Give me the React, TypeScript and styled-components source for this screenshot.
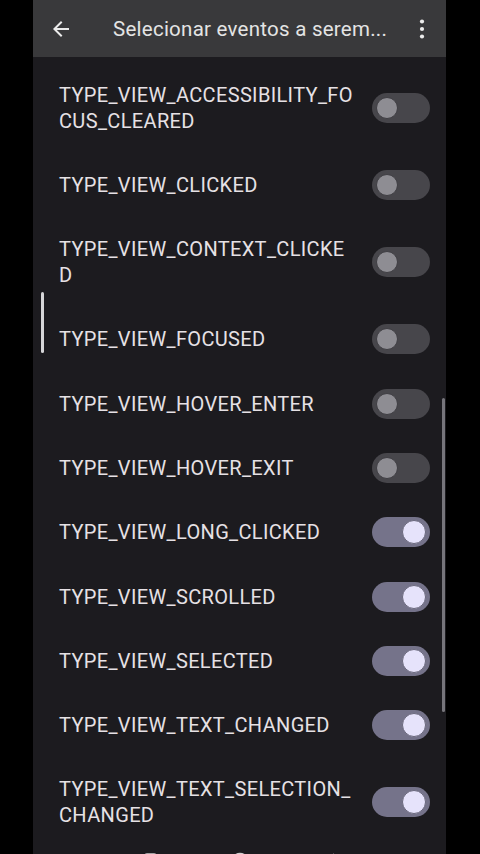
import React from 'react';
import styled, { createGlobalStyle } from 'styled-components';

const GlobalStyle = createGlobalStyle`
  html, body {
    margin: 0;
    padding: 0;
    background: #000;
  }
  * {
    box-sizing: border-box;
  }
`;

const Screen = styled.div`
  width: 480px;
  height: 854px;
  background: #000;
  display: flex;
  justify-content: flex-start;
  padding-left: 33px;
`;

const Phone = styled.div`
  position: relative;
  width: 413px;
  height: 854px;
  background: #1c1b1f;
  overflow: hidden;
  display: flex;
  flex-direction: column;
  font-family: Roboto, "Liberation Sans", sans-serif;
`;

const TopBar = styled.header`
  height: 57px;
  flex-shrink: 0;
  background: #39393b;
  display: flex;
  align-items: center;
  padding: 0 12px 0 16px;
`;

const IconButton = styled.div`
  width: 24px;
  height: 24px;
  display: flex;
  align-items: center;
  justify-content: center;
  flex-shrink: 0;
`;

const Title = styled.div`
  flex: 1;
  margin: 0 8px 0 40px;
  color: #e4e4e4;
  font-size: 20.5px;
  letter-spacing: 0.25px;
  white-space: nowrap;
`;

const List = styled.div`
  display: flex;
  flex-direction: column;
  padding: 6px 16px 0 26px;
  flex-shrink: 0;
`;

const Row = styled.div<{ $tall: boolean }>`
  height: ${(p) => (p.$tall ? '90px' : '64.3px')};
  display: flex;
  align-items: center;
  justify-content: space-between;
`;

const Label = styled.div`
  color: #e6e1e5;
  font-size: 20px;
  line-height: 26px;
  letter-spacing: 0.35px;
`;

const Track = styled.div<{ $on: boolean }>`
  position: relative;
  width: 58px;
  height: 30px;
  border-radius: 15px;
  background: ${(p) => (p.$on ? '#75738a' : '#47464b')};
  flex-shrink: 0;
  display: flex;
  align-items: center;
  justify-content: ${(p) => (p.$on ? 'flex-end' : 'flex-start')};
  padding: 0 4px;
`;

const Thumb = styled.div<{ $on: boolean }>`
  width: ${(p) => (p.$on ? '24px' : '22px')};
  height: ${(p) => (p.$on ? '24px' : '22px')};
  border-radius: 50%;
  background: ${(p) => (p.$on ? '#e6e3fb' : '#8e8d93')};
  border: ${(p) => (p.$on ? '1.5px solid #6a687c' : '1.5px solid #3f3e43')};
`;

const NavBar = styled.div`
  height: 48px;
  flex-shrink: 0;
  display: flex;
  align-items: flex-start;
  padding-top: 4px;
`;

const EdgeGlow = styled.div`
  position: absolute;
  left: 8px;
  top: 292px;
  width: 3px;
  height: 61px;
  border-radius: 2px;
  background: #d6d6d8;
`;

const ScrollThumb = styled.div`
  position: absolute;
  right: 1px;
  top: 398px;
  width: 3px;
  height: 314px;
  border-radius: 2px;
  background: #76757b;
`;

type Item = { lines: string[]; on: boolean };

const items: Item[] = [
  { lines: ['TYPE_VIEW_ACCESSIBILITY_FO', 'CUS_CLEARED'], on: false },
  { lines: ['TYPE_VIEW_CLICKED'], on: false },
  { lines: ['TYPE_VIEW_CONTEXT_CLICKE', 'D'], on: false },
  { lines: ['TYPE_VIEW_FOCUSED'], on: false },
  { lines: ['TYPE_VIEW_HOVER_ENTER'], on: false },
  { lines: ['TYPE_VIEW_HOVER_EXIT'], on: false },
  { lines: ['TYPE_VIEW_LONG_CLICKED'], on: true },
  { lines: ['TYPE_VIEW_SCROLLED'], on: true },
  { lines: ['TYPE_VIEW_SELECTED'], on: true },
  { lines: ['TYPE_VIEW_TEXT_CHANGED'], on: true },
  { lines: ['TYPE_VIEW_TEXT_SELECTION_', 'CHANGED'], on: true },
];

const Switch: React.FC<{ on: boolean }> = ({ on }) => (
  <Track $on={on}>
    <Thumb $on={on} />
  </Track>
);

export default function App() {
  return (
    <>
      <GlobalStyle />
      <Screen>
        <Phone>
          <TopBar>
            <IconButton>
              <svg width="24" height="24" viewBox="0 0 24 24">
                <path d="M20 11H7.83l5.59-5.59L12 4l-8 8 8 8 1.41-1.41L7.83 13H20v-2z" fill="#ececec" />
              </svg>
            </IconButton>
            <Title>Selecionar eventos a serem...</Title>
            <IconButton>
              <svg width="24" height="24" viewBox="0 0 24 24">
                <circle cx="12" cy="4.5" r="2.1" fill="#ececec" />
                <circle cx="12" cy="12" r="2.1" fill="#ececec" />
                <circle cx="12" cy="19.5" r="2.1" fill="#ececec" />
              </svg>
            </IconButton>
          </TopBar>
          <List>
            {items.map((it) => (
              <Row key={it.lines.join('')} $tall={it.lines.length > 1}>
                <Label>
                  {it.lines.map((l, i) => (
                    <div key={i}>{l}</div>
                  ))}
                </Label>
                <Switch on={it.on} />
              </Row>
            ))}
          </List>
          <NavBar>
            <svg width="413" height="30" viewBox="0 0 413 30">
              <rect x="112" y="3" width="11" height="11" rx="2" fill="none" stroke="#d0d0d0" strokeWidth="1.6" />
              <circle cx="207" cy="10" r="7.5" fill="none" stroke="#d0d0d0" strokeWidth="1.6" />
              <path d="M300 3 L306 9" fill="none" stroke="#d0d0d0" strokeWidth="1.6" />
            </svg>
          </NavBar>
          <EdgeGlow />
          <ScrollThumb />
        </Phone>
      </Screen>
    </>
  );
}
